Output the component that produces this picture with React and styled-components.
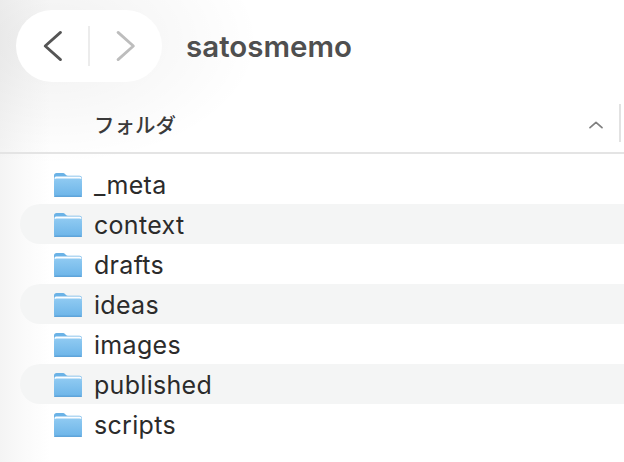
import styled, { createGlobalStyle } from "styled-components";

const GlobalStyle = createGlobalStyle`
  html, body {
    margin: 0;
    padding: 0;
    width: 624px;
    height: 462px;
    overflow: hidden;
    background: #fff;
  }
`;

const Window = styled.div`
  width: 624px;
  height: 462px;
  overflow: hidden;
  font-family: Inter, "Noto Sans CJK JP", sans-serif;
  background:
    radial-gradient(ellipse 210px 125px at 50px 40px, rgba(0, 0, 0, 0.06), rgba(0, 0, 0, 0) 100%),
    linear-gradient(90deg, #f4f4f4 0, #fafafa 24px, #fff 50px);
`;

const Toolbar = styled.div`
  height: 95px;
  box-sizing: border-box;
  padding: 10px 0 0 16px;
  display: flex;
  align-items: flex-start;
  gap: 24px;
`;

const NavPill = styled.div`
  width: 146px;
  height: 72px;
  border-radius: 36px;
  background: #fff;
  display: flex;
  align-items: center;
  justify-content: center;
`;

const NavButton = styled.div`
  width: 72px;
  height: 72px;
  display: flex;
  align-items: center;
  justify-content: center;
  color: ${(p) => (p.$disabled ? "#bdbdbd" : "#555")};
`;

const NavDivider = styled.div`
  width: 2px;
  height: 40px;
  background: #ececec;
`;

const Title = styled.h1`
  margin: 0;
  height: 72px;
  line-height: 73px;
  font-size: 29.5px;
  font-weight: 600;
  color: #4f4f4f;
`;

const HeaderRow = styled.div`
  height: 59px;
  box-sizing: border-box;
  border-bottom: 2px solid #e4e4e4;
  padding: 0 3px 0 94px;
  display: flex;
  align-items: center;
  justify-content: space-between;
`;

const ColumnLabel = styled.span`
  font-size: 20.5px;
  font-weight: 500;
  color: #3a3a3a;
`;

const SortArea = styled.div`
  display: flex;
  align-items: center;
  gap: 13px;
`;

const ColumnDivider = styled.div`
  width: 2px;
  height: 38px;
  background: #e2e2e2;
  position: relative;
  top: -1px;
`;

const List = styled.div`
  padding: 10px 0 0 20px;
  display: flex;
  flex-direction: column;
`;

const Row = styled.div`
  height: 40px;
  box-sizing: border-box;
  display: flex;
  align-items: center;
  gap: 11px;
  padding: 2px 0 0 33px;
  border-radius: 20px 0 0 20px;
  background: ${(p) => (p.$striped ? "#f4f5f5" : "transparent")};
`;

const Name = styled.span`
  font-size: 25px;
  letter-spacing: 0.3px;
  color: #2b2b2b;
  line-height: 38px;
`;

const ChevronIcon = ({ d, size = 30, width = 2.5 }) => (
  <svg width={size} height={size} viewBox="0 0 30 30" fill="none">
    <path d={d} stroke="currentColor" strokeWidth={width} strokeLinecap="round" strokeLinejoin="round" />
  </svg>
);

const SortIcon = styled.div`
  color: #808080;
  display: flex;
  position: relative;
  top: 1px;
`;

const FolderIcon = () => (
  <svg width="30" height="26" viewBox="0 0 30 26">
    <defs>
      <linearGradient id="folderFront" x1="0" y1="0" x2="0" y2="1">
        <stop offset="0" stopColor="#8fcaf2" />
        <stop offset="1" stopColor="#6cb4e8" />
      </linearGradient>
    </defs>
    <path
      d="M1 3.5C1 2 2 1 3.5 1h6.2c1 0 1.6.3 2.3 1l1 1c.5.5 1 .7 1.8.7h11.7c1.5 0 2.5 1 2.5 2.5V8H1z"
      fill="#6ab2e6"
    />
    <rect x="1.5" y="4.5" width="27" height="4" rx="1.5" fill="#fbfdff" />
    <rect x="1" y="6.5" width="28" height="18.5" rx="2.5" fill="url(#folderFront)" />
    <rect x="1" y="23.5" width="28" height="1.5" rx="0.75" fill="#5fa4da" />
  </svg>
);

const folders = ["_meta", "context", "drafts", "ideas", "images", "published", "scripts"];

const App = () => {
  return (
    <Window>
      <GlobalStyle />
      <Toolbar>
        <NavPill>
          <NavButton>
            <ChevronIcon d="M22.5 3 9 15l13.5 12" size={34} />
          </NavButton>
          <NavDivider />
          <NavButton $disabled>
            <ChevronIcon d="M8 3 21.5 15 8 27" size={34} />
          </NavButton>
        </NavPill>
        <Title>satosmemo</Title>
      </Toolbar>
      <HeaderRow>
        <ColumnLabel>フォルダ</ColumnLabel>
        <SortArea>
          <SortIcon>
            <ChevronIcon d="M6 19l9-8 9 8" size={20} width={2.6} />
          </SortIcon>
          <ColumnDivider />
        </SortArea>
      </HeaderRow>
      <List>
        {folders.map((name, i) => (
          <Row key={name} $striped={i % 2 === 1}>
            <FolderIcon />
            <Name>{name}</Name>
          </Row>
        ))}
      </List>
    </Window>
  );
};

export default App;
